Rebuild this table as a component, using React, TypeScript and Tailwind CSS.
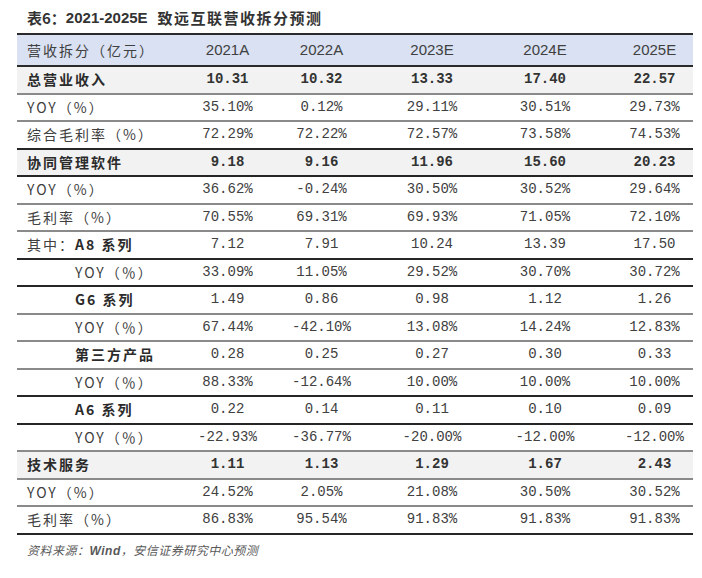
import React from "react";

type Row = {
  label: React.ReactNode;
  vals: string[];
  bold?: boolean;
  indent?: boolean;
  line: "dark" | "gray";
};

const B = ({ children }: { children: React.ReactNode }) => (
  <span className="font-bold text-[#2b2b2b]">{children}</span>
);

const yoy = "YOY（%）";

const rows: Row[] = [
  { label: "总营业收入", vals: ["10.31", "10.32", "13.33", "17.40", "22.57"], bold: true, line: "gray" },
  { label: yoy, vals: ["35.10%", "0.12%", "29.11%", "30.51%", "29.73%"], line: "gray" },
  { label: "综合毛利率（%）", vals: ["72.29%", "72.22%", "72.57%", "73.58%", "74.53%"], line: "dark" },
  { label: "协同管理软件", vals: ["9.18", "9.16", "11.96", "15.60", "20.23"], bold: true, line: "dark" },
  { label: yoy, vals: ["36.62%", "-0.24%", "30.50%", "30.52%", "29.64%"], line: "gray" },
  { label: "毛利率（%）", vals: ["70.55%", "69.31%", "69.93%", "71.05%", "72.10%"], line: "gray" },
  { label: <>其中：<B>A8 系列</B></>, vals: ["7.12", "7.91", "10.24", "13.39", "17.50"], line: "dark" },
  { label: "YOY（％）", indent: true, vals: ["33.09%", "11.05%", "29.52%", "30.70%", "30.72%"], line: "dark" },
  { label: <B>G6 系列</B>, indent: true, vals: ["1.49", "0.86", "0.98", "1.12", "1.26"], line: "gray" },
  { label: "YOY（％）", indent: true, vals: ["67.44%", "-42.10%", "13.08%", "14.24%", "12.83%"], line: "gray" },
  { label: <B>第三方产品</B>, indent: true, vals: ["0.28", "0.25", "0.27", "0.30", "0.33"], line: "gray" },
  { label: "YOY（％）", indent: true, vals: ["88.33%", "-12.64%", "10.00%", "10.00%", "10.00%"], line: "dark" },
  { label: <B>A6 系列</B>, indent: true, vals: ["0.22", "0.14", "0.11", "0.10", "0.09"], line: "dark" },
  { label: "YOY（％）", indent: true, vals: ["-22.93%", "-36.77%", "-20.00%", "-12.00%", "-12.00%"], line: "gray" },
  { label: "技术服务", vals: ["1.11", "1.13", "1.29", "1.67", "2.43"], bold: true, line: "gray" },
  { label: yoy, vals: ["24.52%", "2.05%", "21.08%", "30.50%", "30.52%"], line: "gray" },
  { label: "毛利率（%）", vals: ["86.83%", "95.54%", "91.83%", "91.83%", "91.83%"], line: "dark" },
];

const years = ["2021A", "2022A", "2023E", "2024E", "2025E"];

const cjk = "font-['Noto_Sans_CJK_SC','Noto_Sans',sans-serif]";
const mono = "font-['Liberation_Mono','DejaVu_Sans_Mono',monospace]";
const sans = "font-['Liberation_Sans','Noto_Sans_CJK_SC',sans-serif]";

const grid = "grid grid-cols-[163px_95px_93px_128px_98px_99px]";
const lastPad = "pl-[22px]";

export default function App() {
  return (
    <div className="w-[702px] h-[578px] bg-white pl-[17px] text-[#404040]">
      <div className={`h-[33px] flex items-end pb-[4px] pl-[10px] ${cjk} text-[15px] font-bold text-[#333]`}>
        <span>表6：</span>
        <span className={`${sans} text-[15px] font-bold mr-[10px]`}>2021-2025E</span>
        <span className="tracking-[1.5px]">致远互联营收拆分预测</span>
      </div>
      <div className="w-[676px]">
        <div className={`${grid} h-[34px] bg-[#d9e1f2] border-t-2 border-b-2 border-[#2a2a2a]`}>
          <div className={`flex items-center pl-[10px] ${cjk} text-[14px] tracking-[2px]`}>营收拆分（亿元）</div>
          {years.map((y, i) => (
            <div
              key={y}
              className={`flex items-center justify-center ${sans} text-[15px] ${i === 4 ? lastPad : ""}`}
            >
              {y}
            </div>
          ))}
        </div>
        {rows.map((r, idx) => (
          <div
            key={idx}
            className={`${grid} h-[27.5px] border-b-2 ${r.line === "dark" ? "border-[#262626]" : "border-[#8a8a8a]"} ${r.bold ? "bg-[#f2f2f2]" : "bg-white"}`}
          >
            <div
              className={`flex items-center ${r.indent ? "pl-[58px]" : "pl-[10px]"} ${cjk} text-[14px] tracking-[2px] ${r.bold ? "font-bold text-[#2b2b2b]" : "text-[#404040]"}`}
            >
              {r.label}
            </div>
            {r.vals.map((v, i) => (
              <div
                key={i}
                className={`flex items-center justify-center ${mono} text-[14px] ${r.bold ? "font-bold text-[#333]" : "text-[#404040]"} ${i === 4 ? lastPad : ""}`}
              >
                {v}
              </div>
            ))}
          </div>
        ))}
      </div>
      <div className={`pl-[10px] pt-[6px] ${cjk} text-[12px] italic text-[#595959] tracking-[0.5px]`}>
        资料来源：<span className={`${sans} font-bold`}>Wind</span>，安信证券研究中心预测
      </div>
    </div>
  );
}
